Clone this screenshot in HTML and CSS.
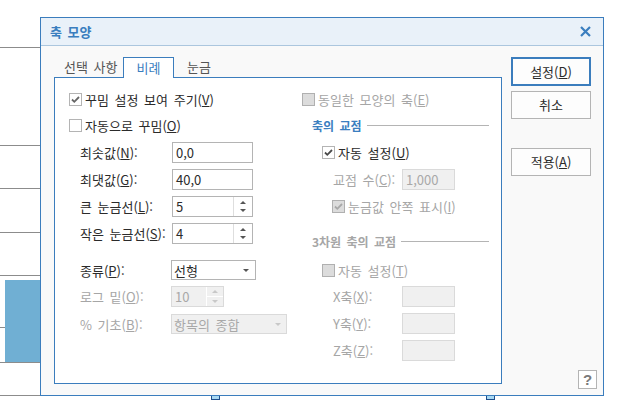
FILE: index.html
```html
<!DOCTYPE html>
<html lang="ko">
<head>
<meta charset="utf-8">
<title>축 모양</title>
<link rel="stylesheet" href="styles.css">
</head>
<body>
<svg class="chart" width="636" height="420" viewBox="0 0 636 420">
  <rect x="5" y="280" width="295" height="82" fill="#70afd3"/>
  <g stroke="#8c8c8c" stroke-width="1">
    <line x1="0" y1="47.5" x2="300" y2="47.5"/>
    <line x1="0" y1="145.5" x2="300" y2="145.5"/>
    <line x1="0" y1="188.5" x2="300" y2="188.5"/>
    <line x1="0" y1="232.5" x2="300" y2="232.5"/>
    <line x1="0" y1="275.5" x2="300" y2="275.5"/>
    <line x1="0" y1="327.5" x2="5" y2="327.5"/>
    <line x1="0" y1="362.5" x2="300" y2="362.5"/>
    <line x1="0" y1="395.5" x2="300" y2="395.5"/>
  </g>
  <rect x="211.5" y="391.5" width="8" height="8" fill="#a8d9f3" stroke="#1f4e8c"/>
  <rect x="486.5" y="391.5" width="8" height="8" fill="#a8d9f3" stroke="#1f4e8c"/>
</svg>

<div class="dialog">
  <div class="titlebar">
    <span class="title">축 모양</span>
    <svg class="close" width="11" height="11" viewBox="0 0 11 11"><path d="M1 1 L10 10 M10 1 L1 10" stroke="#3a7ebf" stroke-width="2.2" fill="none"/></svg>
  </div>
  <div class="body">
    <div class="main">
      <div class="tabs">
        <div class="tab tab-first">선택 사항</div>
        <div class="tab active">비례</div>
        <div class="tab tab-last">눈금</div>
      </div>
      <div class="panel">
        <div class="col col-left">
          <div class="row"><span class="cb"><svg width="11" height="11" viewBox="0 0 11 11"><path d="M2 5.5 L4.3 7.8 L9 3" stroke="#666" stroke-width="1.8" fill="none"/></svg></span>꾸밈 설정 보여 주기(<u>V</u>)</div>
          <div class="row m5"><span class="cb"></span>자동으로 꾸밈(<u>O</u>)</div>
          <div class="row m6"><span class="lbl">최솟값(<u>N</u>):</span><span class="field">0,0</span></div>
          <div class="row m6"><span class="lbl">최댓값(<u>G</u>):</span><span class="field">40,0</span></div>
          <div class="row m6"><span class="lbl">큰 눈금선(<u>L</u>):</span><span class="field spin"><span class="val">5</span><span class="spinbtn"><i class="up"></i><i class="down"></i></span></span></div>
          <div class="row m6"><span class="lbl">작은 눈금선(<u>S</u>):</span><span class="field spin"><span class="val">4</span><span class="spinbtn"><i class="up"></i><i class="down"></i></span></span></div>
          <div class="row h20 m16"><span class="lbl">종류(<u>P</u>):</span><span class="select">선형<i class="down"></i></span></div>
          <div class="row m6 gray"><span class="lbl">로그 밑(<u>O</u>):</span><span class="field spin logspin dis"><span class="val">10</span><span class="spinbtn"><span class="half"><i class="up"></i></span><span class="half"><i class="down"></i></span></span></span></div>
          <div class="row h20 m7 gray"><span class="lbl">% 기초(<u>B</u>):</span><span class="select wide dis">항목의 종합<i class="down"></i></span></div>
        </div>
        <div class="col col-right">
          <div class="row gray"><span class="cb dis"></span>동일한 모양의 축(<u>E</u>)</div>
          <div class="row m5 heading blue">축의 교점</div>
          <div class="row m6 ind20"><span class="cb"><svg width="11" height="11" viewBox="0 0 11 11"><path d="M2 5.5 L4.3 7.8 L9 3" stroke="#4a4a4a" stroke-width="1.8" fill="none"/></svg></span>자동 설정(<u>U</u>)</div>
          <div class="row m6 gray"><span class="rlbl">교점 수(<u>C</u>):</span><span class="field small dis">1,000</span></div>
          <div class="row m6 ind30 gray"><span class="cb dis"><svg width="11" height="11" viewBox="0 0 11 11"><path d="M2 5.5 L4.3 7.8 L9 3" stroke="#a8a8a8" stroke-width="1.8" fill="none"/></svg></span>눈금값 안쪽 표시(<u>I</u>)</div>
          <div class="row h20 m14 heading gray">3차원 축의 교점</div>
          <div class="row m9 ind20 gray"><span class="cb dis"></span>자동 설정(<u>T</u>)</div>
          <div class="row m5 gray"><span class="rlbl">X축(<u>X</u>):</span><span class="field small dis"></span></div>
          <div class="row m6 gray"><span class="rlbl">Y축(<u>Y</u>):</span><span class="field small dis"></span></div>
          <div class="row m6 gray"><span class="rlbl">Z축(<u>Z</u>):</span><span class="field small dis"></span></div>
        </div>
      </div>
    </div>
    <div class="side">
      <button class="btn default">설정(<u>D</u>)</button>
      <button class="btn cancel">취소</button>
      <button class="btn apply">적용(<u>A</u>)</button>
      <div class="help">?</div>
    </div>
  </div>
</div>
</body>
</html>
```

FILE: styles.css
```css
* { box-sizing: border-box; }
html, body { margin: 0; padding: 0; }
body {
  width: 636px;
  height: 420px;
  overflow: hidden;
  background: #ffffff;
  position: relative;
  font-family: "Noto Sans CJK KR", "Noto Sans", sans-serif;
  font-size: 13px;
  word-spacing: 2px;
  color: #2b2b2b;
}
u { text-decoration: underline; text-underline-offset: 1px; }

.chart { position: absolute; left: 0; top: 0; display: block; }

.dialog {
  position: absolute;
  left: 40px;
  top: 17px;
  width: 564px;
  height: 379px;
  border: 1px solid #3b7dbd;
  background: #f9f9f9;
  display: flex;
  flex-direction: column;
}

.titlebar {
  flex: none;
  height: 28px;
  background: #e9f1f9;
  border-bottom: 1px solid #abc6de;
  display: flex;
  align-items: center;
  justify-content: space-between;
  padding: 0 12px 0 9px;
}
.title { font-weight: bold; color: #3a7ebf; font-size: 13px; line-height: 27px; }
.close { display: block; }

.body { flex: 1; display: flex; }

.main { flex: none; width: 461px; padding: 11px 0 0 13px; }

.tabs { display: flex; height: 20px; align-items: flex-start; }
.tab { height: 20px; line-height: 20px; color: #555; white-space: nowrap; }
.tab-first { width: 69px; padding-left: 10px; }
.tab-last { padding-left: 13px; }
.tab.active {
  position: relative;
  z-index: 1;
  width: 51px;
  height: 21px;
  background: #fff;
  border: 1px solid #3b7dbd;
  border-bottom: none;
  text-align: center;
  line-height: 19px;
  color: #3a7ebf;
}

.panel {
  width: 448px;
  height: 307px;
  border: 1px solid #3b7dbd;
  background: #fff;
  display: flex;
}

.col { padding-top: 11px; }
.col-left { width: 247px; padding-left: 14px; }
.col-right { width: 187px; }

.row { display: flex; align-items: center; height: 21px; white-space: nowrap; }
.h20 { height: 20px; }
.m5 { margin-top: 5px; }
.m6 { margin-top: 6px; }
.m7 { margin-top: 7px; }
.m9 { margin-top: 9px; }
.m14 { margin-top: 14px; }
.m16 { margin-top: 16px; }
.ind20 { padding-left: 20px; }
.ind30 { padding-left: 30px; }
.gray { color: #a6a6a6; }
.blue { color: #3a7ebf; }

.cb {
  flex: none;
  width: 13px;
  height: 13px;
  border: 1px solid #b4b4b4;
  background: #fff;
  margin-right: 3px;
  display: flex;
  align-items: center;
  justify-content: center;
}
.cb svg { display: block; }
.cb.dis { background: #dcdcdc; border-color: #b0b0b0; }

.lbl { flex: none; width: 103px; padding-left: 11px; }
.rlbl { flex: none; width: 100px; padding-left: 31px; }

.field {
  flex: none;
  width: 81px;
  height: 21px;
  border: 1px solid #b4b4b4;
  background: #fff;
  padding-left: 3px;
  line-height: 19px;
  color: #2b2b2b;
}
.field.small { width: 53px; }
.field.dis { background: #f0f0f0; border-color: #dadada; color: #a8a8a8; }

.spin { display: flex; padding-left: 0; }
.spin .val { flex: 1; padding-left: 3px; }
.spinbtn {
  flex: none;
  width: 19px;
  border-left: 1px solid #dedede;
  display: flex;
  flex-direction: column;
  align-items: center;
  justify-content: space-around;
  padding: 2px 0;
}
.logspin { width: 53px; margin-left: -1px; }
.logspin .spinbtn { width: 17px; border-left-color: #fff; padding: 0; }
.logspin .half { flex: 1; width: 100%; display: flex; align-items: center; justify-content: center; }
.logspin .half + .half { border-top: 1px solid #fff; }

.up, .down { display: block; width: 0; height: 0; border-left: 3px solid transparent; border-right: 3px solid transparent; }
.up { border-bottom: 3px solid #555; }
.down { border-top: 3px solid #555; }
.dis .up { border-bottom-color: #c8c8c8; }
.dis .down { border-top-color: #c8c8c8; }

.select {
  flex: none;
  width: 85px;
  height: 20px;
  margin-left: -1px;
  border: 1px solid #b4b4b4;
  background: #fff;
  display: flex;
  align-items: center;
  justify-content: space-between;
  padding: 0 6px 0 2px;
  color: #2b2b2b;
}
.select.wide { width: 116px; padding-right: 5px; }
.select.dis { background: #f0f0f0; border-color: #dadada; color: #a8a8a8; }

.heading { font-weight: bold; font-size: 12px; padding-left: 10px; }
.heading::after {
  content: "";
  flex: 1;
  height: 1px;
  background: #b4b4b4;
  margin-left: 5px;
}

.side {
  flex: 1;
  display: flex;
  flex-direction: column;
  align-items: flex-start;
  padding: 11px 0 0 9px;
}
.btn {
  width: 80px;
  height: 28px;
  padding: 0;
  font-family: inherit;
  font-size: 13px;
  word-spacing: 2px;
  color: #2b2b2b;
  background: #fdfdfd;
  border: 1px solid #b4b4b4;
  line-height: 26px;
  text-align: center;
}
.btn.default { border: 2px solid #3b7dbd; height: 29px; }
.btn.cancel { margin-top: 5px; }
.btn.apply { margin-top: 29px; }
.help {
  margin-top: auto;
  margin-bottom: 6px;
  align-self: flex-end;
  margin-right: 6px;
  width: 19px;
  height: 19px;
  border: 1px solid #b4b4b4;
  background: #fff;
  color: #7a7a7a;
  font-family: "Liberation Sans", sans-serif;
  font-weight: bold;
  font-size: 15px;
  line-height: 17px;
  text-align: center;
}
```
